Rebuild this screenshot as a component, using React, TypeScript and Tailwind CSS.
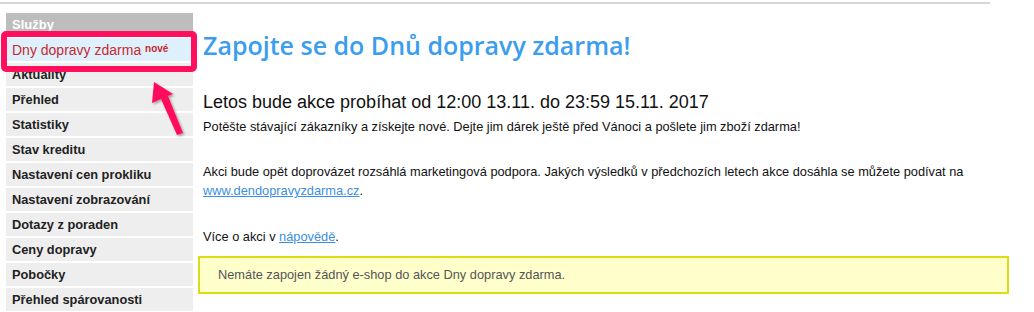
import React from "react";

const items = [
  "Aktuality",
  "Přehled",
  "Statistiky",
  "Stav kreditu",
  "Nastavení cen prokliku",
  "Nastavení zobrazování",
  "Dotazy z poraden",
  "Ceny dopravy",
  "Pobočky",
  "Přehled spárovanosti",
];

export default function App() {
  return (
    <div className="relative w-[1034px] h-[312px] overflow-hidden bg-white" style={{ fontFamily: '"Liberation Sans", Arial, sans-serif' }}>
      <div className="absolute left-0 top-[2px] w-[990px] h-[2px] bg-[#d6d6d6]" />
      <div className="flex pt-[13px]">
        <div className="ml-[6px] w-[187px] flex flex-col gap-[2px]">
          <div className="h-[23px] bg-[#bdbdbd] text-white font-bold text-[13px] leading-[23px] pl-[6px]">Služby</div>
          <div className="h-[23px] bg-[#def0fc] text-[#c62a2f] text-[14px] leading-[25px] pl-[6px] whitespace-nowrap">
            Dny dopravy zdarma <sup className="font-bold text-[10px] relative top-[-3px]">nové</sup>
          </div>
          {items.map((t) => (
            <div key={t} className="h-[23px] bg-[#eeeeee] text-[#222] font-bold text-[12.8px] leading-[23px] pl-[6px]">{t}</div>
          ))}
        </div>
        <div className="ml-[10px] flex-1 pr-[25px]">
          <h1 className="text-[#3b9ded] text-[25px] font-semibold leading-[30px] mt-[17px]" style={{ fontFamily: '"Open Sans", sans-serif' }}>
            Zapojte se do Dnů dopravy zdarma!
          </h1>
          <div className="text-[18px] text-[#111] mt-[32px] leading-[20px]">Letos bude akce probíhat od 12:00 13.11. do 23:59 15.11. 2017</div>
          <p className="text-[12.8px] text-[#111] mt-[5px] leading-[19px]">Potěšte stávající zákazníky a získejte nové. Dejte jim dárek ještě před Vánoci a pošlete jim zboží zdarma!</p>
          <p className="text-[12.8px] text-[#111] mt-[26px] leading-[19px]">
            Akci bude opět doprovázet rozsáhlá marketingová podpora. Jakých výsledků v předchozích letech akce dosáhla se můžete podívat na{" "}
            <a className="text-[#3b8fe0] underline">www.dendopravyzdarma.cz</a>.
          </p>
          <p className="text-[12.8px] text-[#111] mt-[27px] leading-[19px]">
            Více o akci v <a className="text-[#3b8fe0] underline">nápovědě</a>.
          </p>
          <div className="mt-[10px] -ml-[5px] w-[811px] h-[38px] border-2 border-[#dcdc14] bg-[#ffffcc] text-[12.8px] text-[#555] leading-[34px] pl-[18px]">
            Nemáte zapojen žádný e-shop do akce Dny dopravy zdarma.
          </div>
        </div>
      </div>
      <div className="absolute left-[1px] top-[31px] w-[196px] h-[41px] border-[6px] border-[#ff0f5c] rounded-[5px]" />
      <svg className="absolute left-[140px] top-[70px]" width="60" height="75" viewBox="0 0 60 75">
        <defs>
          <filter id="sh" x="-30%" y="-30%" width="160%" height="160%">
            <feDropShadow dx="1.5" dy="1.5" stdDeviation="1.2" floodColor="#000" floodOpacity="0.35" />
          </filter>
        </defs>
        <path d="M14 12 L33 24 L28 26 L43 63 L37 65 L21 29 L12 33 Z" fill="#ff0f5c" filter="url(#sh)" />
      </svg>
    </div>
  );
}
